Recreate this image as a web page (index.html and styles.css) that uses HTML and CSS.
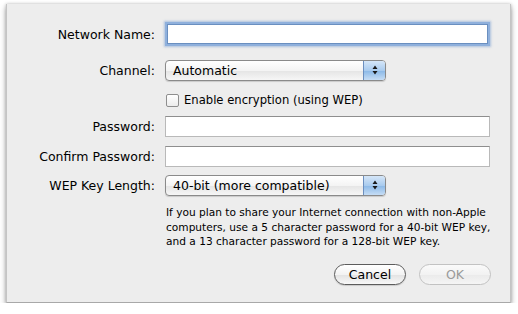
FILE: index.html
```html
<!DOCTYPE html>
<html lang="en">
<head>
    <meta charset="UTF-8">
    <title>Network Settings</title>
    <link rel="stylesheet" href="styles.css">
</head>
<body>

<div class="sheet">
    <div class="row row-name">
        <label class="label">Network Name:</label>
        <input class="field focused" type="text">
    </div>

    <div class="row row-channel">
        <label class="label">Channel:</label>
        <div class="popup">
            <span class="popup-text">Automatic</span>
            <span class="popup-arrows">
                <svg width="8" height="12" viewBox="0 0 8 12"><path d="M4 1.5 L6.5 5 L1.5 5 Z M4 10.5 L6.5 7 L1.5 7 Z" fill="#1a1a1a"/></svg>
            </span>
        </div>
    </div>

    <div class="row row-check">
        <span class="label"></span>
        <span class="checkbox"></span>
        <span class="check-text">Enable encryption (using WEP)</span>
    </div>

    <div class="row row-pass">
        <label class="label">Password:</label>
        <input class="field" type="password">
    </div>

    <div class="row row-confirm">
        <label class="label">Confirm Password:</label>
        <input class="field" type="password">
    </div>

    <div class="row row-key">
        <label class="label">WEP Key Length:</label>
        <div class="popup">
            <span class="popup-text">40-bit (more compatible)</span>
            <span class="popup-arrows">
                <svg width="8" height="12" viewBox="0 0 8 12"><path d="M4 1.5 L6.5 5 L1.5 5 Z M4 10.5 L6.5 7 L1.5 7 Z" fill="#1a1a1a"/></svg>
            </span>
        </div>
    </div>

    <p class="note">If you plan to share your Internet connection with non-Apple computers, use a 5 character password for a 40-bit WEP key, and a 13 character password for a 128-bit WEP key.</p>

    <div class="buttons">
        <button class="btn">Cancel</button>
        <button class="btn disabled">OK</button>
    </div>
</div>

</body>
</html>
```

FILE: styles.css
```css
/* Page */
body {
    margin: 0;
    background: #ffffff;
    font-family: 'DejaVu Sans', 'Liberation Sans', sans-serif;
    color: #000;
}

/* Sheet window */
.sheet {
    margin: 4px 0 0 6px;
    width: 505px;
    height: 299px;
    box-sizing: border-box;
    padding-top: 17px;
    background: #ededed;
    border-left: 1px solid #c4c4c4;
    border-right: 1px solid #c4c4c4;
    border-bottom: 1px solid #a8a8a8;
    box-shadow: 0 3px 6px rgba(0, 0, 0, 0.35), 0 0 3px rgba(0, 0, 0, 0.2);
}

.row {
    display: flex;
    align-items: center;
}

.label {
    width: 148px;
    margin-right: 10px;
    text-align: right;
    font-size: 12.5px;
    flex-shrink: 0;
}

.row-name { height: 26px; }
.row-channel { height: 22px; margin-top: 12px; }
.row-check { height: 16px; margin-top: 11px; }
.row-pass { height: 22px; margin-top: 7px; }
.row-confirm { height: 22px; margin-top: 8px; }
.row-key { height: 22px; margin-top: 7px; }

/* Text fields */
.field {
    width: 325px;
    height: 21px;
    box-sizing: border-box;
    margin: 0;
    border: 1px solid #b9b9b9;
    border-top-color: #8e8e8e;
    background: #fff;
    outline: none;
    font: inherit;
}

.field.focused {
    width: 321px;
    height: 20px;
    margin-left: 2px;
    border: 1px solid #6a8fc0;
    box-shadow: 0 0 0 2px #8fb0dc, 0 0 2px 3px rgba(110, 150, 205, 0.5);
}

/* Popup buttons */
.popup {
    display: flex;
    align-items: center;
    width: 221px;
    height: 21px;
    box-sizing: border-box;
    border: 1px solid #8a8a8a;
    border-radius: 4px;
    background: linear-gradient(#ffffff, #f4f4f4 50%, #e6e6e6 55%, #f6f6f6);
    box-shadow: 0 1px 1px rgba(0, 0, 0, 0.15);
    overflow: hidden;
}

.popup-text {
    flex: 1;
    padding-left: 7px;
    font-size: 12.5px;
}

.popup-arrows {
    width: 21px;
    height: 100%;
    display: flex;
    align-items: center;
    justify-content: center;
    border-left: 1px solid #6c8fbf;
    background: linear-gradient(#d5e6f8, #a9cbee 50%, #8fbbe8 55%, #c6ddf5);
}

/* Checkbox */
.checkbox {
    width: 13px;
    height: 13px;
    box-sizing: border-box;
    margin-left: 1px;
    border: 1px solid #8e8e8e;
    border-radius: 2px;
    background: linear-gradient(#ffffff, #ececec);
}

.check-text {
    margin-left: 5px;
    font-size: 11.6px;
}

/* Help text */
.note {
    margin: 9px 0 0 159px;
    width: 340px;
    font-size: 10.6px;
    line-height: 14.5px;
}

/* Buttons */
.buttons {
    display: flex;
    justify-content: flex-end;
    gap: 13px;
    margin-top: 15px;
    padding-right: 19px;
}

.btn {
    width: 72px;
    height: 21px;
    border: 1px solid #5c5c5c;
    border-radius: 11px;
    background: linear-gradient(#ffffff, #f3f3f3 50%, #e4e4e4 55%, #f8f8f8);
    box-shadow: 0 1px 1px rgba(0, 0, 0, 0.15);
    font-family: inherit;
    font-size: 12.5px;
    color: #000;
    padding: 0;
}

.btn.disabled {
    border-color: #c2c2c2;
    color: #9a9a9a;
    background: linear-gradient(#fafafa, #f2f2f2 50%, #ebebeb 55%, #f5f5f5);
    box-shadow: none;
}
```
